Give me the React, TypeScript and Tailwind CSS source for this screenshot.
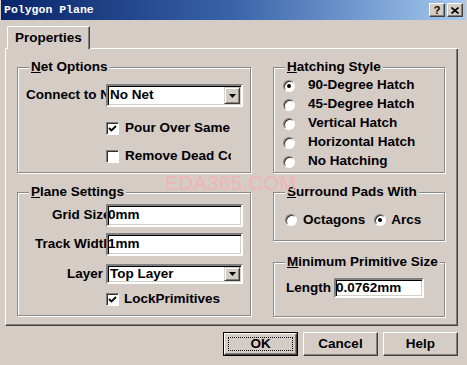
import React from "react";

const BG = "bg-[#d6ccc6]";

function Radio({ checked }: { checked?: boolean }) {
  return (
    <div className="w-[12px] h-[12px] shrink-0 rounded-full border border-t-[#808080] border-l-[#808080] border-b-white border-r-white bg-white shadow-[inset_1px_1px_0_#303030] flex items-center justify-center">
      {checked && <div className="w-[4px] h-[4px] rounded-full bg-black" />}
    </div>
  );
}

function Check({ checked }: { checked?: boolean }) {
  return (
    <div className="w-[13px] h-[13px] shrink-0 border border-t-[#808080] border-l-[#808080] border-b-white border-r-white bg-white shadow-[inset_1px_1px_0_#303030] flex items-center justify-center">
      {checked && (
        <svg width="9" height="9" viewBox="0 0 9 9">
          <path d="M1 4 L3.5 6.5 L8 2" fill="none" stroke="#000" strokeWidth="1.8" />
        </svg>
      )}
    </div>
  );
}

function Sunken({ className, children }: { className?: string; children?: React.ReactNode }) {
  return (
    <div
      className={
        "border-2 border-t-[#808080] border-l-[#808080] border-b-white border-r-white bg-white shadow-[inset_1px_1px_0_#000,inset_-1px_-1px_0_#d4d0c8] flex items-center " +
        (className ?? "")
      }
    >
      {children}
    </div>
  );
}

function DropBtn({ h }: { h: string }) {
  return (
    <div
      className={
        "ml-auto mr-[1px] w-[16px] border border-t-[#d4d0c8] border-l-[#d4d0c8] border-b-[#404040] border-r-[#404040] bg-[#d6ccc6] shadow-[inset_1px_1px_0_#fff,inset_-1px_-1px_0_#808080] flex items-center justify-center " +
        h
      }
    >
      <svg width="7" height="4" viewBox="0 0 7 4">
        <path d="M0 0 H7 L3.5 4 Z" fill="#000" />
      </svg>
    </div>
  );
}

function Legend({ u, rest }: { u: string; rest: string }) {
  return (
    <legend className={"ml-[11px] px-[2px] leading-[14px] " + BG}>
      <span className="underline underline-offset-[1px]">{u}</span>
      {rest}
    </legend>
  );
}

function Button({ label, def }: { label: string; def?: boolean }) {
  return (
    <div
      className={
        "w-[75px] h-[24px] flex items-center justify-center " +
        (def ? "border border-black" : "")
      }
    >
      <div className="w-full h-full border border-t-white border-l-white border-b-[#404040] border-r-[#404040] shadow-[inset_-1px_-1px_0_#808080] flex items-center justify-center p-[3px]">
        <div
          className={
            "w-full h-full flex items-center justify-center " +
            (def ? "border border-dotted border-black" : "")
          }
        >
          {label}
        </div>
      </div>
    </div>
  );
}

export default function App() {
  return (
    <div
      className={
        "relative w-[467px] h-[365px] overflow-hidden flex flex-col text-black font-bold text-[13.5px] " +
        BG
      }
      style={{ fontFamily: '"Liberation Sans", Arial, sans-serif' }}
    >
      {/* title bar */}
      <div className="mx-[1px] mt-0 h-[20px] bg-gradient-to-r from-[#0a246a] via-[#3a64a8] to-[#a6caf0] flex items-center pl-[3px] pr-[3px]">
        <span
          className="text-white text-[11.5px] font-bold leading-none"
          style={{ fontFamily: '"Liberation Mono", "Courier New", monospace' }}
        >
          Polygon Plane
        </span>
        <div className="ml-auto flex gap-[2px]">
          <div className="w-[16px] h-[14px] bg-[#d6ccc6] border border-t-white border-l-white border-b-[#404040] border-r-[#404040] shadow-[inset_-1px_-1px_0_#808080] flex items-center justify-center text-[11px] leading-none font-bold">
            ?
          </div>
          <div className="w-[16px] h-[14px] bg-[#d6ccc6] border border-t-white border-l-white border-b-[#404040] border-r-[#404040] shadow-[inset_-1px_-1px_0_#808080] flex items-center justify-center">
            <svg width="8" height="7" viewBox="0 0 8 7">
              <path d="M0.5 0.5 L7.5 6.5 M7.5 0.5 L0.5 6.5" stroke="#000" strokeWidth="1.6" />
            </svg>
          </div>
        </div>
      </div>

      {/* tabs */}
      <div className="ml-[5px] mt-[6px] w-[453px] flex items-end">
        <div className="w-[2px] h-[1px] bg-white" />
        <div className="w-[83px] h-[23px] border-t border-l border-t-white border-l-white border-r border-r-[#404040] shadow-[inset_-1px_0_0_#808080] flex items-center pl-[7px] rounded-tl-[2px]">
          Properties
        </div>
        <div className="flex-1 h-[1px] bg-white" />
      </div>

      {/* panel */}
      <div className="ml-[5px] w-[453px] h-[277px] border-l border-l-white border-r border-r-[#404040] border-b border-b-[#404040] shadow-[inset_-1px_-1px_0_#808080] flex pl-[11px] pt-[11px]">
        {/* left column */}
        <div className="w-[234px] flex flex-col">
          <fieldset className="h-[113px] border border-[#8a8a8a] shadow-[inset_1px_1px_0_#fff,1px_1px_0_#fff] flex flex-col">
            <Legend u="N" rest="et Options" />
            <div className="mt-[10px] flex items-center h-[23px]">
              <div className="w-[88px] overflow-hidden whitespace-nowrap pl-[8px]">Connect to Net</div>
              <Sunken className="w-[137px] h-[23px]">
                <span className="pl-[2px]">No Net</span>
                <DropBtn h="h-[17px]" />
              </Sunken>
            </div>
            <div className="mt-[13px] h-[16px] flex items-center pl-[88px]">
              <Check checked />
              <div className="ml-[6px] w-[106px] overflow-hidden whitespace-nowrap">Pour Over Same Net</div>
            </div>
            <div className="mt-[12px] h-[16px] flex items-center pl-[88px]">
              <Check />
              <div className="ml-[6px] w-[106px] overflow-hidden whitespace-nowrap">Remove Dead Copper</div>
            </div>
          </fieldset>

          <fieldset className="mt-[12px] h-[131px] border border-[#8a8a8a] shadow-[inset_1px_1px_0_#fff,1px_1px_0_#fff] flex flex-col">
            <Legend u="P" rest="lane Settings" />
            <div className="mt-[5px] flex items-center h-[23px]">
              <div className="w-[88px] overflow-hidden whitespace-nowrap pl-[34px]">Grid Size</div>
              <Sunken className="w-[137px] h-[23px]">
                <span>0mm</span>
              </Sunken>
            </div>
            <div className="mt-[6px] flex items-center h-[23px]">
              <div className="w-[88px] overflow-hidden whitespace-nowrap pl-[17px]">Track Width</div>
              <Sunken className="w-[137px] h-[23px]">
                <span>1mm</span>
              </Sunken>
            </div>
            <div className="mt-[8px] flex items-center h-[20px]">
              <div className="w-[88px] overflow-hidden whitespace-nowrap pl-[49px]">Layer</div>
              <Sunken className="w-[137px] h-[20px]">
                <span className="pl-[2px]">Top Layer</span>
                <DropBtn h="h-[14px]" />
              </Sunken>
            </div>
            <div className="mt-[7px] h-[16px] flex items-center pl-[88px]">
              <Check checked />
              <div className="ml-[5px] whitespace-nowrap">LockPrimitives</div>
            </div>
          </fieldset>
        </div>

        {/* right column */}
        <div className="ml-[22px] w-[172px] flex flex-col">
          <fieldset className="h-[113px] border border-[#8a8a8a] shadow-[inset_1px_1px_0_#fff,1px_1px_0_#fff] flex flex-col">
            <Legend u="H" rest="atching Style" />
            <div className="mt-[2px] flex flex-col">
              {[
                ["90-Degree Hatch", true],
                ["45-Degree Hatch", false],
                ["Vertical Hatch", false],
                ["Horizontal Hatch", false],
                ["No Hatching", false],
              ].map(([t, c]) => (
                <div key={t as string} className="h-[19px] flex items-center pl-[9px]">
                  <Radio checked={c as boolean} />
                  <span className="ml-[13px] whitespace-nowrap">{t as string}</span>
                </div>
              ))}
            </div>
          </fieldset>

          <fieldset className="mt-[12px] h-[56px] border border-[#8a8a8a] shadow-[inset_1px_1px_0_#fff,1px_1px_0_#fff] flex flex-col">
            <Legend u="S" rest="urround Pads With" />
            <div className="mt-[12px] h-[18px] flex items-center pl-[11px]">
              <Radio />
              <span className="ml-[6px]">Octagons</span>
              <div className="ml-[9px]">
                <Radio checked />
              </div>
              <span className="ml-[5px]">Arcs</span>
            </div>
          </fieldset>

          <fieldset className="mt-[14px] h-[62px] border border-[#8a8a8a] shadow-[inset_1px_1px_0_#fff,1px_1px_0_#fff] flex flex-col">
            <Legend u="M" rest="inimum Primitive Size" />
            <div className="mt-[9px] h-[20px] flex items-center pl-[12px]">
              <span>Length</span>
              <Sunken className="ml-[3px] w-[90px] h-[20px]">
                <span>0.0762mm</span>
              </Sunken>
            </div>
          </fieldset>
        </div>
      </div>

      {/* buttons */}
      <div className="mt-[6px] pr-[9px] flex justify-end gap-[5px]">
        <Button label="OK" def />
        <Button label="Cancel" />
        <Button label="Help" />
      </div>

      {/* watermark */}
      <div className="absolute left-[165px] top-[173px] text-[20px] font-normal leading-none tracking-[0.5px] text-[#f0b4b4] pointer-events-none">
        EDA365.COM
      </div>
    </div>
  );
}
